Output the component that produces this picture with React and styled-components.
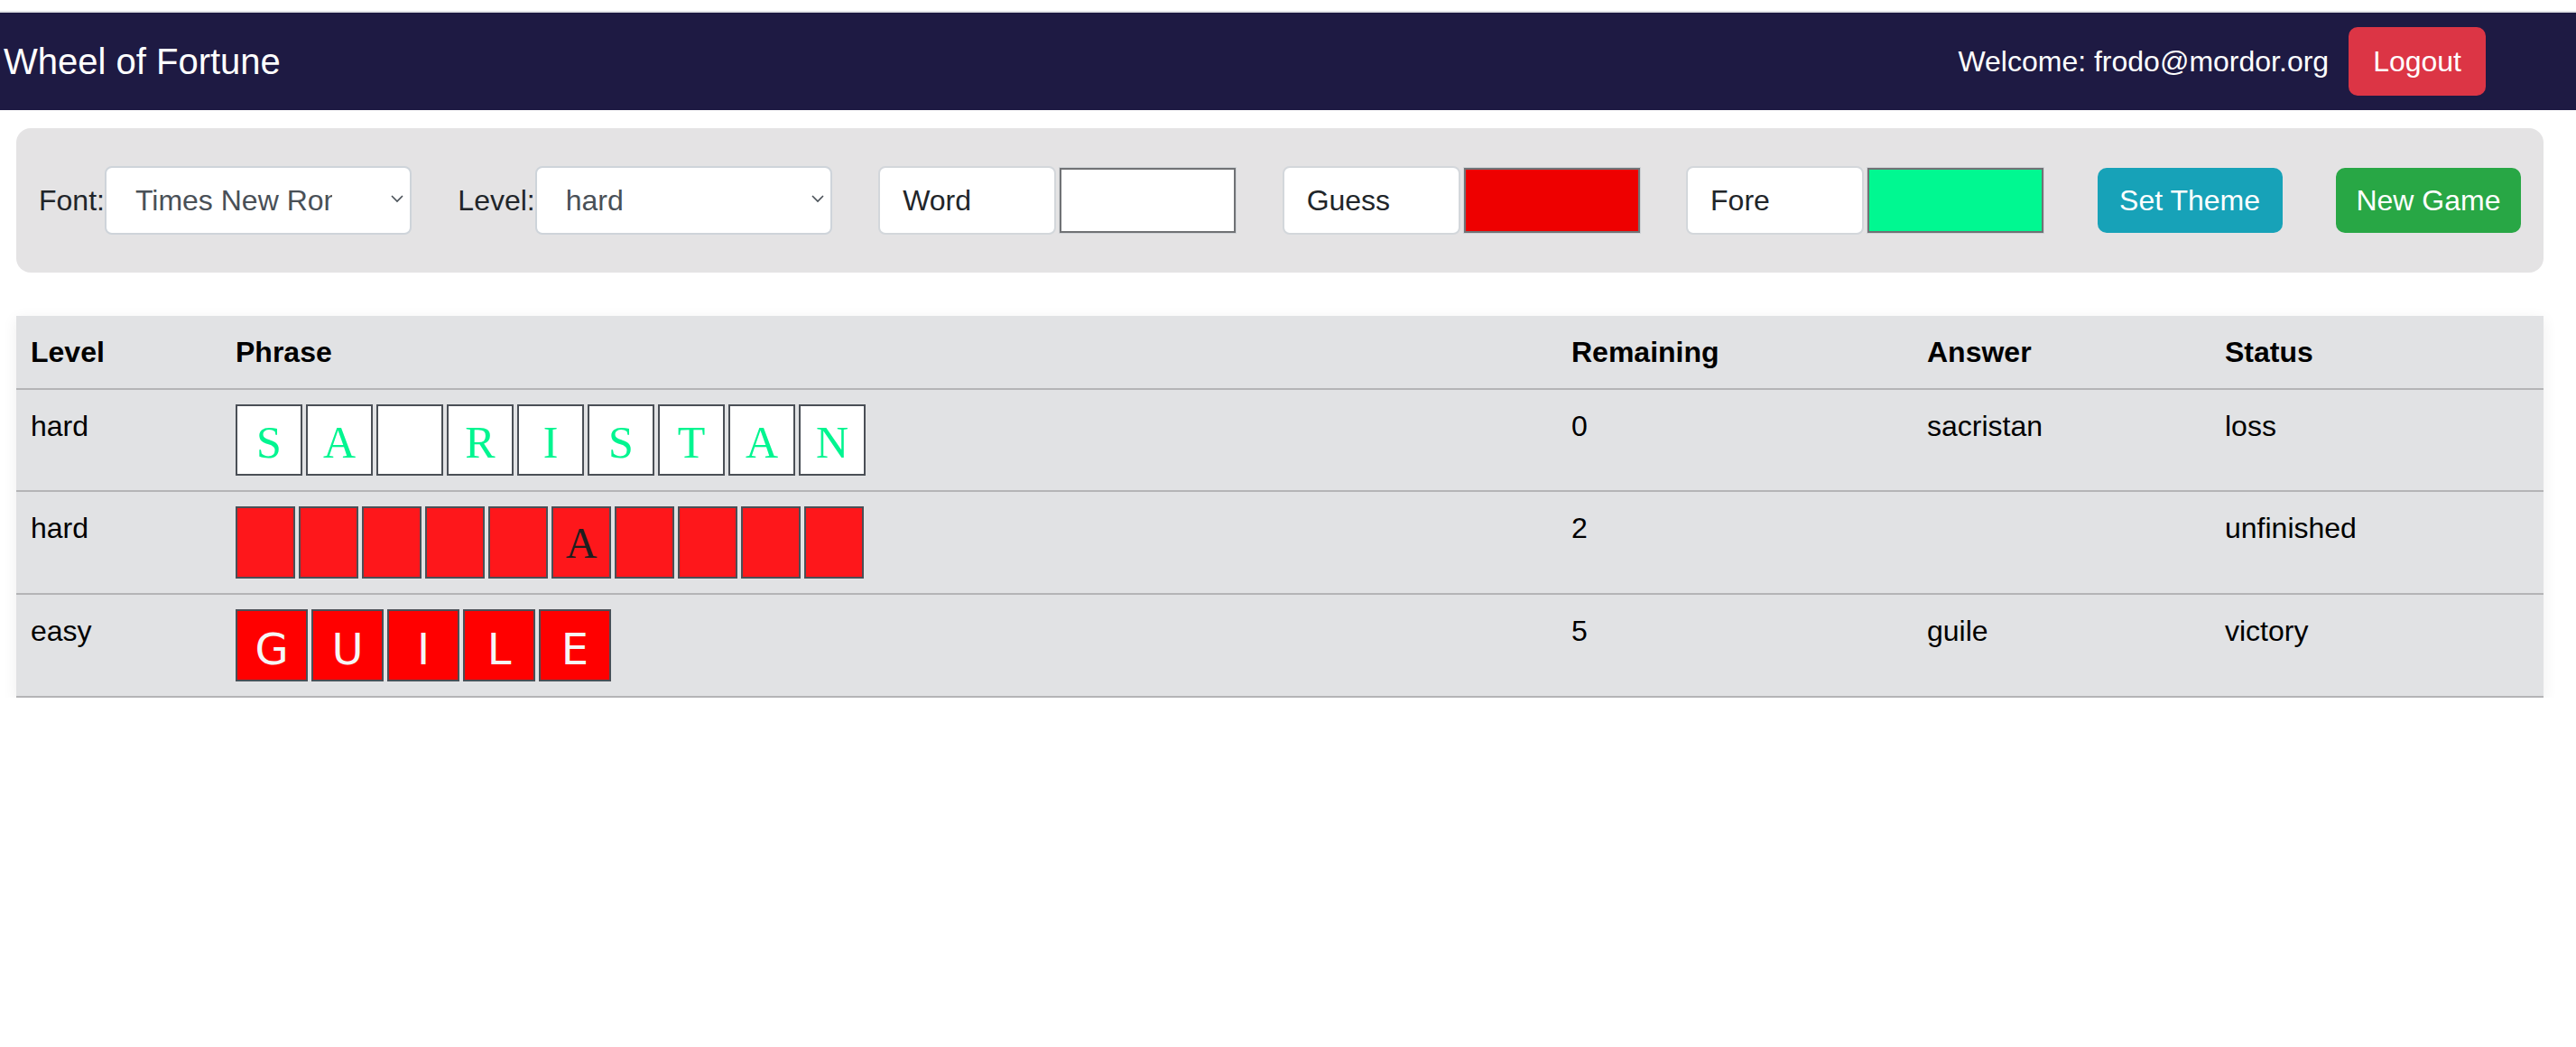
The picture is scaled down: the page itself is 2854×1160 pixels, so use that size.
import React from "react";
import styled, { createGlobalStyle } from "styled-components";

const GlobalStyle = createGlobalStyle`
  html, body { margin: 0; padding: 0; background: #ffffff; }
  body {
    font-family: "Liberation Sans", Arial, sans-serif;
    font-size: 32px;
    line-height: 48px;
    color: #212529;
  }
  * { box-sizing: border-box; }
`;

const Page = styled.div`
  padding-top: 12px;
`;

const NavBar = styled.header`
  display: flex;
  align-items: center;
  justify-content: space-between;
  height: 110px;
  padding: 16px 100px 16px 2px;
  background: #1e1a43;
  border-top: 2px solid #e2e3e7;
`;

const Brand = styled.div`
  color: #ffffff;
  font-size: 40px;
  line-height: 60px;
  padding-left: 2px;
`;

const UserArea = styled.div`
  display: flex;
  align-items: center;
  gap: 22px;
`;

const Welcome = styled.span`
  color: #ffffff;
  font-size: 32px;
`;

const tones = {
  danger: "#dc3545",
  info: "#17a2b8",
  success: "#28a745",
};

const Button = styled.button`
  font-family: inherit;
  font-size: 32px;
  line-height: 48px;
  color: #ffffff;
  background: ${(p) => tones[p.$tone]};
  border: none;
  border-radius: 10px;
  height: ${(p) => p.$h}px;
  min-width: ${(p) => p.$w || 0}px;
  padding: 0 ${(p) => p.$px}px;
  margin-left: ${(p) => p.$ml || 0}px;
  cursor: pointer;
`;

const Main = styled.main`
  padding: 20px 36px 0 18px;
  display: flex;
  flex-direction: column;
  gap: 48px;
`;

const Toolbar = styled.form`
  display: flex;
  align-items: center;
  justify-content: space-between;
  height: 160px;
  padding: 0 25px;
  background: #e4e3e4;
  border-radius: 16px;
`;

const Field = styled.div`
  display: flex;
  align-items: center;
`;

const Label = styled.label`
  color: #212529;
  font-size: 32px;
`;

const SelectWrap = styled.div`
  position: relative;
  width: ${(p) => p.$w}px;
  height: 76px;
`;

const Select = styled.select`
  appearance: none;
  -webkit-appearance: none;
  width: 100%;
  height: 100%;
  font-family: inherit;
  font-size: 32px;
  color: #495057;
  background: #ffffff;
  border: 2px solid #ced4da;
  border-radius: 8px;
  padding: 0 86px 0 32px;
  outline: none;
`;

const Chevron = styled.svg`
  position: absolute;
  right: 9px;
  top: 31px;
  width: 14px;
  height: 10px;
  pointer-events: none;
`;

const Prepend = styled.div`
  display: flex;
  align-items: center;
  width: 197px;
  height: 76px;
  padding-left: 25px;
  background: #ffffff;
  border: 2px solid #d3d7db;
  border-radius: 8px;
  color: #212529;
  font-size: 32px;
`;

const Swatch = styled.div`
  width: 195px;
  height: 72px;
  margin-left: 4px;
  background: ${(p) => p.$color};
  border: 2px solid #707275;
  box-shadow: 0 0 0 1px #d0d3d6;
`;

const GamesTable = styled.table`
  width: 2800px;
  table-layout: fixed;
  border-collapse: collapse;
  background: #e1e2e4;
  box-shadow: 0 4px 16px rgba(0, 0, 0, 0.07);
  color: #000000;
`;

const Th = styled.th`
  text-align: left;
  font-weight: 700;
  padding: 16px;
  line-height: 48px;
  border-bottom: 2px solid #b4b4b6;
`;

const Td = styled.td`
  vertical-align: top;
  padding: 16px;
  line-height: 48px;
  border-bottom: 2px solid #b4b4b6;
`;

const Tiles = styled.div`
  display: flex;
  gap: 4px;
`;

const Tile = styled.div`
  display: flex;
  justify-content: center;
  align-items: flex-start;
  width: ${(p) => p.$w}px;
  height: ${(p) => p.$h}px;
  padding-top: ${(p) => p.$pt}px;
  background: ${(p) => p.$bg};
  color: ${(p) => p.$fg};
  border: 2px solid #4a4f56;
  font-family: ${(p) => p.$font};
  font-size: ${(p) => p.$fs}px;
  line-height: 1;
`;

const SERIF = '"Liberation Serif", "Times New Roman", serif';
const SANS = '"DejaVu Sans", Verdana, sans-serif';

const rows = [
  {
    level: "hard",
    letters: ["S", "A", "", "R", "I", "S", "T", "A", "N"],
    tile: { w: 74, h: 79, pt: 15, bg: "#ffffff", fg: "#00f590", font: SERIF, fs: 50 },
    remaining: "0",
    answer: "sacristan",
    status: "loss",
  },
  {
    level: "hard",
    letters: ["", "", "", "", "", "A", "", "", "", ""],
    tile: { w: 66, h: 80, pt: 15, bg: "#fe171b", fg: "#1e1e1e", font: SERIF, fs: 48 },
    remaining: "2",
    answer: "",
    status: "unfinished",
  },
  {
    level: "easy",
    letters: ["G", "U", "I", "L", "E"],
    tile: { w: 80, h: 80, pt: 18, bg: "#ff0000", fg: "#f6f6f6", font: SANS, fs: 48 },
    remaining: "5",
    answer: "guile",
    status: "victory",
  },
];

const cols = [227, 1480, 394, 330, 369];

function ChevronIcon() {
  return (
    <Chevron viewBox="0 0 14 10">
      <path d="M1 2 L7 8 L13 2" fill="none" stroke="#495057" strokeWidth="1.6" />
    </Chevron>
  );
}

export default function App() {
  return (
    <Page>
      <GlobalStyle />
      <NavBar>
        <Brand>Wheel of Fortune</Brand>
        <UserArea>
          <Welcome>Welcome: frodo@mordor.org</Welcome>
          <Button type="button" $tone="danger" $h={76} $px={27}>
            Logout
          </Button>
        </UserArea>
      </NavBar>
      <Main>
        <Toolbar onSubmit={(e) => e.preventDefault()}>
          <Field>
            <Label>Font:</Label>
            <SelectWrap $w={340}>
              <Select defaultValue="Times New Roman">
                <option>Times New Roman</option>
                <option>Verdana</option>
              </Select>
              <ChevronIcon />
            </SelectWrap>
          </Field>
          <Field>
            <Label>Level:</Label>
            <SelectWrap $w={329}>
              <Select defaultValue="hard">
                <option>easy</option>
                <option>medium</option>
                <option>hard</option>
              </Select>
              <ChevronIcon />
            </SelectWrap>
          </Field>
          <Field>
            <Prepend>Word</Prepend>
            <Swatch $color="#ffffff" />
          </Field>
          <Field>
            <Prepend>Guess</Prepend>
            <Swatch $color="#ee0000" />
          </Field>
          <Field>
            <Prepend>Fore</Prepend>
            <Swatch $color="#00f891" />
          </Field>
          <Button type="button" $tone="info" $h={72} $px={20} $w={205} $ml={8}>
            Set Theme
          </Button>
          <Button type="button" $tone="success" $h={72} $px={20} $w={205} $ml={8}>
            New Game
          </Button>
        </Toolbar>
        <GamesTable>
          <colgroup>
            {cols.map((w, i) => (
              <col key={i} style={{ width: w }} />
            ))}
          </colgroup>
          <thead>
            <tr>
              <Th>Level</Th>
              <Th>Phrase</Th>
              <Th>Remaining</Th>
              <Th>Answer</Th>
              <Th>Status</Th>
            </tr>
          </thead>
          <tbody>
            {rows.map((r, i) => (
              <tr key={i}>
                <Td>{r.level}</Td>
                <Td>
                  <Tiles>
                    {r.letters.map((l, j) => (
                      <Tile
                        key={j}
                        $w={r.tile.w}
                        $h={r.tile.h}
                        $pt={r.tile.pt}
                        $bg={r.tile.bg}
                        $fg={r.tile.fg}
                        $font={r.tile.font}
                        $fs={r.tile.fs}
                      >
                        {l}
                      </Tile>
                    ))}
                  </Tiles>
                </Td>
                <Td>{r.remaining}</Td>
                <Td>{r.answer}</Td>
                <Td>{r.status}</Td>
              </tr>
            ))}
          </tbody>
        </GamesTable>
      </Main>
    </Page>
  );
}
